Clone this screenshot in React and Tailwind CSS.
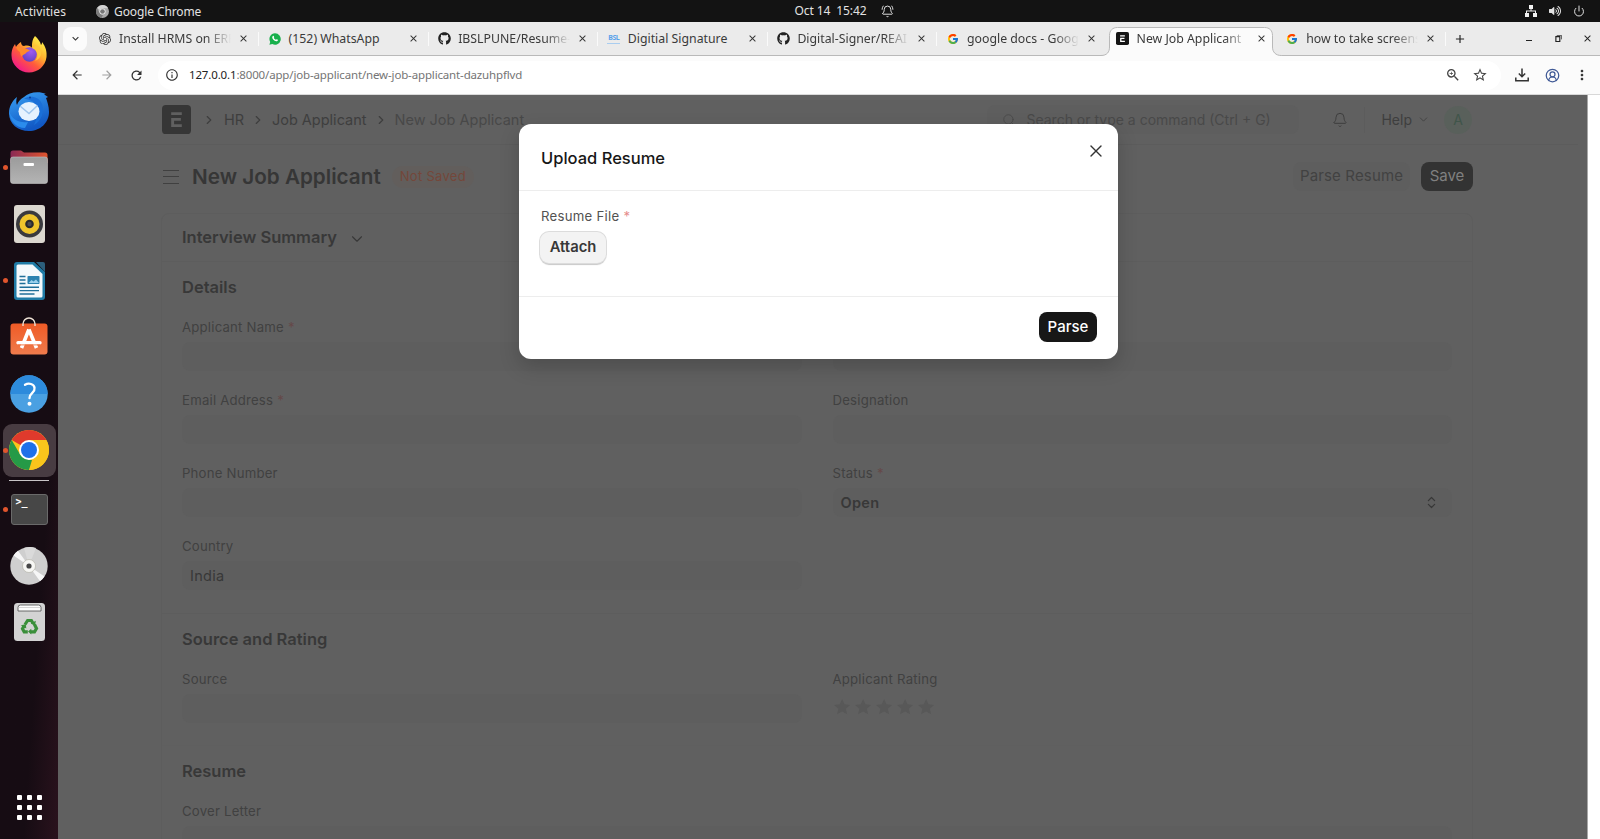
// src/App.jsx
import React from 'react';
import { FaGithub, FaVolumeUp } from 'react-icons/fa';
import { FcGoogle } from 'react-icons/fc';
import { SiOpenai } from 'react-icons/si';
import {
  MdArrowBack,
  MdArrowForward,
  MdRefresh,
  MdInfoOutline,
  MdZoomIn,
  MdStarBorder,
  MdMoreVert,
  MdAdd,
  MdClose,
  MdKeyboardArrowDown,
} from 'react-icons/md';
import { X, ChevronRight, ChevronDown, ChevronsUpDown, Search, Bell, BellRing, Power, CircleUserRound } from 'lucide-react';

// --- Small logos ---
const ErpLogo = ({ className, bg, fg }) => (
  <svg viewBox="0 0 30 30" className={className}>
    <rect width="30" height="30" rx="4" fill={bg} />
    <path d="M9.500 7.500h11v2.800h-11zM9.500 13.500h10v2.800h-7v3.700h8v2.800h-11z" fill={fg} />
  </svg>
);

const WhatsAppLogo = () => (
  <svg viewBox="0 0 12 12" className="w-[12px] h-[12px]">
    <path d="M6 .3a5.700 5.700 0 1 1-2.700 10.700L.4 11.700l.8-2.800A5.700 5.700 0 0 1 6 .3z" fill="#18b04c" />
    <path d="M3.700 3.200c.5-.6 1-.5 1.200.1l.3.9c-.1.400-.6.500-.4.900.5.800 1.100 1.300 2 1.700.4 0 .6-.7 1-.6l1.100.6c.3.800-.8 1.700-1.700 1.500-2.200-.5-4-2.500-4-4.100 0-.4.200-.8.500-1z" fill="#fff" />
  </svg>
);

const SignatureLogo = () => (
  <div className="w-[13px] flex flex-col items-center">
    <span className="text-[7px] leading-[8px] font-bold tracking-[-0.5px] text-[#5aa2ea]">BSL</span>
    <span className="w-[13px] h-px bg-[#a9cdf0] mt-px"></span>
  </div>
);

const MonoChrome = () => (
  <svg viewBox="0 0 14 14" className="w-[13px] h-[13px]">
    <circle cx="7" cy="7" r="7" fill="#a8a8a8" />
    <path d="M7 0a7 7 0 0 1 6.1 3.5H7A3.5 3.5 0 0 0 3.9 5.3L1.2 3A7 7 0 0 1 7 0z" fill="#d4d4d4" />
    <path d="M1 3.3l3 5.3A3.5 3.5 0 0 0 7.6 10.4L6 14A7 7 0 0 1 1 3.3z" fill="#7c7c7c" />
    <circle cx="7" cy="7" r="3.3" fill="#eee" />
    <circle cx="7" cy="7" r="2.5" fill="#777" />
  </svg>
);

// --- Dock icons ---
const Firefox = () => (
  <svg viewBox="0 0 36 38" className="w-[36px] h-[38px]">
    <defs>
      <linearGradient id="fx" x1="0.85" y1="0.1" x2="0.2" y2="0.95">
        <stop offset="0" stopColor="#fff04a" />
        <stop offset="0.35" stopColor="#ffb02e" />
        <stop offset="0.62" stopColor="#ff5a3c" />
        <stop offset="1" stopColor="#f2168f" />
      </linearGradient>
      <radialGradient id="fxGlobe" cx="0.6" cy="0.3" r="0.8">
        <stop offset="0" stopColor="#a05bf0" />
        <stop offset="1" stopColor="#5a3fc0" />
      </radialGradient>
    </defs>
    <path d="M24 1c3 3 5 5 6 9 1-1 1-2 1-3 4 5 5 10 4.500 15C34.500 31 27 37.500 18 37.500S.5 30 .5 20.500C.5 15 2 12 4 9l1 3c1-2 3-4 5-5 0 2 1 4 3 4 4-1 7 0 8 2 0-5 0-8 3-12z" fill="url(#fx)" />
    <circle cx="18.500" cy="19.500" r="7.300" fill="url(#fxGlobe)" />
    <path d="M5 12c3-1 5 0 7 2 3-1 5 0 7 2-2 0-3 1-4 2-1 2-4 1-4 4-1-1-2-3-2-5-2-1-3-3-4-5z" fill="#ff8a2a" />
    <path d="M21 13c6 2 7 9 3 13 8-3 8-12 2-16z" fill="#ffc83a" />
  </svg>
);

const Thunderbird = () => (
  <svg viewBox="0 0 40 40" className="w-[40px] h-[40px] mt-[2px]">
    <defs>
      <linearGradient id="tb" x1="0" y1="0" x2="0.4" y2="1">
        <stop offset="0" stopColor="#3aa2f5" />
        <stop offset="1" stopColor="#1158c4" />
      </linearGradient>
    </defs>
    <path d="M15 5C20 0 30-1 37 2c-2 0-2 1-1 1l3 2-2 1c1 3 3 8 3 14 0 11-9 19-20 19S0 32 0 21C0 15 3 9 8 5c-1 3-1 6 0 8 1-3 3-6 7-8z" fill="url(#tb)" />
    <path d="M15 7C20 3 30 4 33 12c3 8-1 17-8 21 3-7 4-12 2-19-2-5-7-7-12-7z" fill="#1a6fd8" />
    <ellipse cx="20" cy="19.500" rx="10.500" ry="9.500" fill="#e6f2fe" />
    <path d="M11 14l9 7.500 8.500-8" fill="none" stroke="#9fc6ee" strokeWidth="1.500" />
    <path d="M0 19c3 9 10 12 19 11l-3 6C7 36 1 29 0 19z" fill="#2b8cec" />
    <circle cx="21" cy="5.500" r="0.900" fill="#0b3c8c" />
  </svg>
);

const Files = () => (
  <svg viewBox="0 0 38 34" className="w-[38px] h-[34px]">
    <defs>
      <linearGradient id="fl" x1="0" x2="1">
        <stop offset="0" stopColor="#8a2a55" />
        <stop offset="1" stopColor="#e0552d" />
      </linearGradient>
      <linearGradient id="flFront" x1="0" x2="0" y1="0" y2="1">
        <stop offset="0" stopColor="#9b9b9b" />
        <stop offset="1" stopColor="#b4b4b4" />
      </linearGradient>
    </defs>
    <path d="M.5 3a2.500 2.500 0 0 1 2.500-2.500h8l3 2h21A2.500 2.500 0 0 1 37.500 5v8H.5z" fill="url(#fl)" />
    <rect x="0.500" y="7" width="37" height="26.500" rx="2.500" fill="url(#flFront)" stroke="#c4c4c4" strokeWidth="0.600" />
    <rect x="13.500" y="13" width="10.500" height="3" rx="1" fill="#fff" />
  </svg>
);

const Rhythmbox = () => (
  <svg viewBox="0 0 31 38" className="w-[31px] h-[38px]">
    <rect width="31" height="38" rx="3" fill="#dcd8d0" />
    <circle cx="15.500" cy="19" r="13.500" fill="#3a3a3e" />
    <circle cx="15.500" cy="19" r="10" fill="#f0c52c" />
    <circle cx="15.500" cy="19" r="4.300" fill="#2a2a2c" />
    <circle cx="15.500" cy="19" r="2.200" fill="#4a4a50" />
  </svg>
);

const Writer = () => (
  <svg viewBox="0 0 31 38" className="w-[31px] h-[38px]">
    <path d="M3 0h17l11 10v25a3 3 0 0 1-3 3H3a3 3 0 0 1-3-3V3a3 3 0 0 1 3-3z" fill="#1f7ba6" />
    <path d="M22 0h7a2 2 0 0 1 2 2v8z" fill="#2c5f7c" />
    <path d="M4 2.500h14.500L28.500 12v22a1.500 1.500 0 0 1-1.500 1.500H4A1.500 1.500 0 0 1 2.500 34V4A1.500 1.500 0 0 1 4 2.500z" fill="#f4f9fc" />
    <path d="M5.500 14.500h6M5.500 18h6M5.500 21.500h6M5.500 25.300h19.500M5.500 28.600h19.500M5.500 32h15" stroke="#1f6f99" strokeWidth="1.400" />
    <rect x="13.500" y="14" width="12" height="8" rx="0.800" fill="#2b82b0" />
    <path d="M14.500 21l3-3 2 1.500 2.500-2 3 3.500z" fill="#9bd0ec" />
  </svg>
);

const Store = () => (
  <svg viewBox="0 0 38 38" className="w-[38px] h-[38px] mb-[3px]">
    <defs>
      <linearGradient id="st" x1="0" x2="0" y1="0" y2="1">
        <stop offset="0" stopColor="#ef5b26" />
        <stop offset="1" stopColor="#ef7b4c" />
      </linearGradient>
    </defs>
    <rect x="0.500" y="6.500" width="37" height="31" rx="3" fill="url(#st)" />
    <path d="M13 9V7a6 6 0 0 1 12 0v2" fill="none" stroke="#efe3d6" strokeWidth="1.400" />
    <path d="M18.900 12.500L11.500 31M18.900 12.500L26.500 31" stroke="#fff" strokeWidth="3.600" />
    <path d="M8 25.700h22" stroke="#fff" strokeWidth="3.400" strokeLinecap="round" />
    <path d="M8 27.900h22" stroke="#ef6f3c" strokeWidth="0.900" />
  </svg>
);

const HelpIcon = () => (
  <svg viewBox="0 0 38 38" className="w-[38px] h-[38px]">
    <circle cx="19" cy="19" r="18.700" fill="#4aa0e2" />
    <path d="M.3 19a18.700 18.700 0 0 1 37.400 0z" fill="#2d8bdc" />
    <path d="M15 9.800c2-1.200 4-1.400 6-.8 4.300 1.300 4.600 5.800 1.500 8.700-2 1.800-3 3-3 5.500" fill="none" stroke="#fff" strokeWidth="2.300" strokeLinecap="round" />
    <circle cx="19.500" cy="28.700" r="2" fill="#fff" />
  </svg>
);

const Chrome = () => (
  <svg viewBox="0 0 40 40" className="w-[40px] h-[40px]">
    <circle cx="20" cy="20" r="20" fill="#f9c51c" />
    <path d="M20 20L2.700 10A20 20 0 0 1 37.300 10z" fill="#df3a2c" />
    <path d="M2.700 10l8.700 15L20 30l3 0-3 10A20 20 0 0 1 2.700 10z" fill="#259a47" />
    <path d="M28.700 25L20 40A20 20 0 0 0 37.300 10H20z" fill="#f9c51c" />
    <circle cx="20" cy="20" r="10" fill="#fff" />
    <circle cx="20" cy="20" r="8" fill="#1f70e8" />
  </svg>
);

const Terminal = () => (
  <div className="w-[37px] h-[31px] rounded-[3px] bg-[#474747] border border-[#6a6a6a] pl-1 text-[10px] leading-[13px] text-white font-bold font-['DejaVu_Sans_Mono',monospace]">
    &gt;_
  </div>
);

const Disc = () => (
  <svg viewBox="0 0 38 38" className="w-[38px] h-[38px]">
    <circle cx="19" cy="19" r="18.700" fill="#cfcfcf" />
    <path d="M19 19L3.500 8.500A18.700 18.700 0 0 1 8 3.800zM19 19l15.500 10.500a18.700 18.700 0 0 1-4.500 4.700z" fill="#f6f6f6" />
    <path d="M19 19L14 1a18.700 18.700 0 0 1 12 0z" fill="#dadada" />
    <circle cx="19" cy="19" r="6.500" fill="#f7f7f4" stroke="#b0aea2" strokeWidth="0.600" />
    <circle cx="19" cy="19" r="2.600" fill="#474747" />
  </svg>
);

const Trash = () => (
  <svg viewBox="0 0 31 38" className="w-[31px] h-[38px]">
    <rect width="31" height="38" rx="3.500" fill="#d3d3d3" />
    <path d="M4 8V4.500A2.500 2.500 0 0 1 6.500 2h18A2.500 2.500 0 0 1 27 4.500V8z" fill="#fff" stroke="#5a5a5a" strokeWidth="0.900" />
    <path d="M5 4.500h21" stroke="#c4c4c4" strokeWidth="0.700" />
    <g fill="none" stroke="#3a8f3a" strokeWidth="3.200">
      <path d="M11 21.500l2.600-4h3.800l1.600 2.700" />
      <path d="M20.500 21.500l2 4-2 3.300h-4" />
      <path d="M13.800 28.800h-3.600l-1.700-3 1.800-3.200" />
    </g>
    <path d="M21.800 17.800l-.8 5.200-4.200-2.400zM17.300 25.800v5.700l-3.300-2.900zM6.800 22.600l5-1.600.5 4.600z" fill="#3a8f3a" />
  </svg>
);

const dockApps = [
  { name: 'firefox', Icon: Firefox },
  { name: 'thunderbird', Icon: Thunderbird },
  { name: 'files', Icon: Files, running: true },
  { name: 'rhythmbox', Icon: Rhythmbox },
  { name: 'writer', Icon: Writer, running: true },
  { name: 'store', Icon: Store },
  { name: 'help', Icon: HelpIcon },
  { name: 'chrome', Icon: Chrome, running: true, active: true },
];

const dockExtras = [
  { name: 'terminal', Icon: Terminal, running: true },
  { name: 'disc', Icon: Disc },
  { name: 'trash', Icon: Trash },
];

const DockItem = ({ app }) => (
  <div className="relative w-full h-[56.6px] flex items-center justify-center flex-shrink-0">
    {app.running && <span className="absolute left-[3px] w-[5px] h-[5px] rounded-full bg-[#e0552d] z-10"></span>}
    <div className={`w-[53px] h-[53px] rounded-[9px] flex items-center justify-center ${app.active ? 'bg-[#483c42]' : ''}`}>
      <app.Icon />
    </div>
  </div>
);

const Dock = () => (
  <aside className="w-[58px] flex-shrink-0 bg-gradient-to-br from-[#160c13] from-70% to-[#2a121d] flex flex-col items-center pt-1">
    {dockApps.map((app) => (
      <DockItem key={app.name} app={app} />
    ))}
    <div className="w-10 h-px bg-[#c9c5c7] mt-[1px] flex-shrink-0"></div>
    {dockExtras.map((app) => (
      <DockItem key={app.name} app={app} />
    ))}
    <div className="mt-auto mb-[19px] grid grid-cols-3 gap-[5px]">
      {[...Array(9)].map((_, i) => (
        <span key={i} className="w-[5px] h-[5px] rounded-[1px] bg-white"></span>
      ))}
    </div>
  </aside>
);

const TopBar = () => (
  <header className="h-[22px] flex-shrink-0 bg-[#131313] text-[#e2e2e2] text-[12px] flex items-center">
    <div className="flex-1 flex items-center pt-px">
      <span className="ml-[15px] tracking-[0.1px]">Activities</span>
      <span className="ml-[30px] flex items-center gap-[5px] tracking-[-0.1px]">
        <MonoChrome />
        Google Chrome
      </span>
    </div>
    <div className="flex items-center ml-[104px]">
      <span className="whitespace-pre tracking-[-0.1px]">Oct 14  15:42</span>
      <BellRing className="w-[13px] h-[13px] ml-[15px]" strokeWidth={1.8} />
    </div>
    <div className="flex-1 flex items-center justify-end gap-[12px] pr-[15px]">
      <svg viewBox="0 0 12 12" className="w-[12px] h-[12px]" fill="#f2f2f2">
        <path d="M4 0h4v4H4zM0 8h4v4H0zM8 8h4v4H8zM5.500 4h1v1.500H11V8h-1V6.500H2V8H1V5.500h4.500z" />
      </svg>
      <FaVolumeUp className="w-[12px] h-[12px]" />
      <Power className="w-[12px] h-[12px]" strokeWidth={2} />
    </div>
  </header>
);

const tabs = [
  { title: 'Install HRMS on ERP', icon: <SiOpenai className="w-[12px] h-[12px] text-[#333]" />, fade: true },
  { title: '(152) WhatsApp', icon: <WhatsAppLogo /> },
  { title: 'IBSLPUNE/Resume-', icon: <FaGithub className="w-[13px] h-[13px] text-[#222]" />, fade: true },
  { title: 'Digitial Signature', icon: <SignatureLogo /> },
  { title: 'Digital-Signer/REAI', icon: <FaGithub className="w-[13px] h-[13px] text-[#222]" />, fade: true },
  { title: 'google docs - Goog', icon: <FcGoogle className="w-[12px] h-[12px]" />, fade: true },
  { title: 'New Job Applicant', icon: <ErpLogo className="w-[13px] h-[13px]" bg="#151515" fg="#fff" />, fade: true, active: true },
  { title: 'how to take screens', icon: <FcGoogle className="w-[12px] h-[12px]" />, fade: true },
];

const Tab = ({ tab, divider }) => (
  <div className="relative w-[169.6px] h-full flex items-center pl-[9px] flex-shrink-0">
    {tab.active && (
      <svg viewBox="0 0 184 29" className="absolute left-[-6px] bottom-[-1px] w-[184px] h-[29px]">
        <path d="M-1 28.500H0c6 0 8.500-3.500 8.500-8.500V8.500c0-5 3-8 8-8h147c5 0 8 3 8 8V20c0 5 3 8.500 9 8.500h4V30H-1z" fill="#fbfbfb" />
        <path d="M0 28.500c6 0 8.500-3.500 8.500-8.500V8.500c0-5 3-8 8-8h147c5 0 8 3 8 8V20c0 5 3 8.500 9 8.500h4" fill="none" stroke="#b9b9b9" />
      </svg>
    )}
    <div className="relative w-[13px] flex justify-center mr-[7.500px]">{tab.icon}</div>
    <div
      className={`relative w-[112px] pt-[2px] text-[12.300px] text-[#3a3a3a] whitespace-nowrap ${
        tab.fade ? '[mask-image:linear-gradient(to_right,black_78%,transparent)]' : ''
      }`}
    >
      {tab.title}
    </div>
    <MdClose className="relative w-[11px] h-[11px] ml-[7px] text-[#333]" />
    {divider && <span className="absolute right-0 w-px h-[14px] bg-[#fafafa]"></span>}
  </div>
);

const BrowserChrome = () => (
  <div className="flex-shrink-0">
    <div className="h-[34px] bg-[#ebebeb] border-b border-[#b9b9b9] flex items-center">
      <div className="w-[24px] h-[24px] ml-[5px] mr-[2.500px] rounded-[8px] bg-[#fbfbfb] flex items-center justify-center flex-shrink-0">
        <MdKeyboardArrowDown className="w-[13px] h-[13px] text-[#333]" />
      </div>
      {tabs.map((tab, i) => (
        <Tab key={i} tab={tab} divider={!tab.active && i !== 5} />
      ))}
      <MdAdd className="w-[14px] h-[14px] ml-[7px] text-[#222]" />
      <div className="ml-auto flex items-center text-[#222]">
        <span className="w-[6px] h-px bg-[#222] mt-[4px]"></span>
        <svg viewBox="0 0 8 8" className="w-[7px] h-[7px] ml-[23px]" fill="none" stroke="#222">
          <path d="M1 1.800h4.500V7.500H1z" strokeWidth="1.300" />
          <path d="M2 .5h5.500V5" strokeWidth="0.800" />
        </svg>
        <MdClose className="w-[11px] h-[11px] ml-[20px] mr-[7px]" />
      </div>
    </div>
    <div className="h-[39px] bg-[#fbfbfb] border-b border-[#d8d8d8] flex items-center text-[#444]">
      <MdArrowBack className="w-[14px] h-[14px] ml-[12px] text-[#333]" />
      <MdArrowForward className="w-[14px] h-[14px] ml-[16px] text-[#a0a0a0]" />
      <MdRefresh className="w-[15px] h-[15px] ml-[15px] text-[#333]" />
      <div className="w-[1343px] h-[29px] ml-[14px] rounded-full bg-white flex items-center pl-[7px]">
        <MdInfoOutline className="w-[14px] h-[14px] text-[#333]" />
        <span className="ml-[10px] text-[11.500px] tracking-[-0.150px] text-[#757575]">
          <span className="text-[#222]">127.0.0.1</span>:8000/app/job-applicant/new-job-applicant-dazuhpflvd
        </span>
        <MdZoomIn className="w-[16px] h-[16px] ml-auto" />
        <MdStarBorder className="w-[16px] h-[16px] ml-[11px] mr-[13px]" />
      </div>
      <svg viewBox="0 0 14 14" className="w-[14px] h-[14px] ml-[14px]" fill="none" stroke="#333" strokeWidth="1.500">
        <path d="M7 .5v8M3.800 5.500L7 8.700l3.200-3.200M.8 9.500v3.200h12.400V9.500" />
      </svg>
      <CircleUserRound className="w-[15px] h-[15px] ml-[16px] text-[#405a96]" strokeWidth={2} />
      <MdMoreVert className="w-[16px] h-[16px] ml-[14px] text-[#333]" />
    </div>
  </div>
);

// --- Page behind the modal ---
const Navbar = () => (
  <nav className="h-[50px] border-b border-[#5c5c5c] pl-[104px] pr-[106px] flex items-center text-[14.500px] text-[#3e3e3e]">
    <ErpLogo className="w-[29px] h-[29px]" bg="#363636" fg="#606060" />
    <ChevronRight className="w-[14px] h-[14px] ml-[11px]" />
    <span className="ml-[8px] tracking-[-0.100px]">HR</span>
    <ChevronRight className="w-[14px] h-[14px] ml-[7px]" />
    <span className="ml-[7px]">Job Applicant</span>
    <ChevronRight className="w-[14px] h-[14px] ml-[7px]" />
    <span className="ml-[7px] text-[#484848]">New Job Applicant</span>
    <div className="ml-auto w-[312px] h-[29px] rounded-[8px] bg-[#5e5e5e] flex items-center pl-[15px] text-[14px] text-[#494949]">
      <Search className="w-[14px] h-[14px] mr-[10px]" strokeWidth={1.500} />
      Search or type a command (Ctrl + G)
    </div>
    <Bell className="w-[16px] h-[16px] ml-[33px]" strokeWidth={1.500} />
    <span className="w-px h-[26px] bg-[#5c5c5c] ml-[16px] mr-[16px]"></span>
    <span className="text-[14px]">Help</span>
    <ChevronDown className="w-[13px] h-[13px] ml-[5px]" strokeWidth={1.500} />
    <div className="w-[28px] h-[28px] rounded-full bg-[#59605b] text-[#40554a] ml-[14px] flex items-center justify-center text-[14px]">A</div>
  </nav>
);

const PageHead = () => (
  <div className="h-[63px] pl-[104px] pr-[105px] flex items-center">
    <div className="w-[16px] flex flex-col gap-[5.500px] ml-[1px]">
      <span className="h-px bg-[#404040]"></span>
      <span className="h-px bg-[#404040]"></span>
      <span className="h-px bg-[#404040]"></span>
    </div>
    <h1 className="ml-[13px] text-[20.700px] font-semibold text-[#363636]">New Job Applicant</h1>
    <span className="ml-[11px] h-[22px] px-[8px] rounded-full bg-[#625e5c] text-[#74473a] text-[13px] flex items-center tracking-[0.300px]">Not Saved</span>
    <button className="ml-auto w-[117px] h-[29px] rounded-[8px] bg-[#5e5e5e] text-[#424242] text-[15px] tracking-[0.150px]">Parse Resume</button>
    <button className="ml-[11px] w-[52px] h-[29px] rounded-[8px] bg-[#333] text-[#808080] text-[15px]">Save</button>
  </div>
);

const Field = ({ label, required, value, bold, select, children }) => (
  <div className="h-[73px]">
    <div className="h-[26px] flex items-center text-[13.200px] text-[#414141] tracking-[0.200px]">
      {label}
      {required && <span className="ml-[4px] text-[#654848]">*</span>}
    </div>
    {children || (
      <div
        className={`mt-[1px] h-[29px] rounded-[8px] bg-[#5e5e5e] px-[8px] flex items-center justify-between text-[14.500px] text-[#383838] tracking-[0.300px] ${
          bold ? 'font-semibold' : ''
        }`}
      >
        {value}
        {select && <ChevronsUpDown className="w-[15px] h-[15px] mr-[5px]" strokeWidth={2} />}
      </div>
    )}
  </div>
);

const SectionTitle = ({ children }) => (
  <h2 className="h-[51px] mb-[2px] flex items-center text-[16.500px] font-semibold text-[#383838]">{children}</h2>
);

const Form = () => (
  <div className="ml-[103px] mr-[105px] mt-[5px] h-[700px] border border-[#5d5d5d] rounded-[8px]">
    <section className="h-[48px] px-[20px] border-b border-[#5d5d5d] flex items-center text-[16.500px] font-semibold text-[#383838]">
      Interview Summary
      <ChevronDown className="w-[18px] h-[18px] ml-[11px] mt-[3px]" strokeWidth={1.500} />
    </section>
    <section className="h-[352px] px-[20px] border-b border-[#5d5d5d]">
      <SectionTitle>Details</SectionTitle>
      <div className="grid grid-cols-2 gap-x-[31px]">
        <div>
          <Field label="Applicant Name" required />
          <Field label="Email Address" required />
          <Field label="Phone Number" />
          <Field label="Country" value="India" />
        </div>
        <div>
          <Field label="" />
          <Field label="Designation" />
          <Field label="Status" required value="Open" bold select />
        </div>
      </div>
    </section>
    <section className="h-[132px] px-[20px] border-b border-[#5f5f5f]">
      <SectionTitle>Source and Rating</SectionTitle>
      <div className="grid grid-cols-2 gap-x-[31px]">
        <Field label="Source" />
        <Field label="Applicant Rating">
          <div className="mt-[5px] flex gap-[3px]">
            {[1, 2, 3, 4, 5].map((n) => (
              <svg key={n} viewBox="0 0 18 18" className="w-[18.200px] h-[18px]" fill="#585858">
                <path d="M9 1l2.400 5.300 5.600.6-4.200 3.800 1.200 5.600L9 13.500l-5 2.800 1.200-5.600L1 6.900l5.600-.6z" />
              </svg>
            ))}
          </div>
        </Field>
      </div>
    </section>
    <section className="px-[20px]">
      <SectionTitle>Resume</SectionTitle>
      <Field label="Cover Letter" />
    </section>
  </div>
);

const UploadModal = () => (
  <div className="absolute left-[519px] top-[124px] w-[599px] h-[235px] rounded-[12px] bg-white shadow-[0_8px_20px_rgba(0,0,0,0.18)] flex flex-col text-[#171717]">
    <div className="h-[67px] border-b border-[#ededed] px-[22px] flex items-center justify-between flex-shrink-0">
      <h3 className="text-[16.500px] font-medium pt-[2px]">Upload Resume</h3>
      <X className="w-[20px] h-[20px] mr-[-10px] mb-[12px] text-[#333]" strokeWidth={1.600} />
    </div>
    <div className="flex-1 border-b border-[#ededed] px-[22px] pt-[13px]">
      <div className="h-[26px] flex items-center text-[13.200px] text-[#525252] tracking-[0.260px]">
        Resume File <span className="ml-[4px] text-[#e58a8a]">*</span>
      </div>
      <button className="mt-[2px] -ml-px w-[66px] h-[31px] rounded-[9px] bg-[#f3f3f3] text-[#383838] text-[14.800px] font-semibold shadow-[0_0_0_1px_#dcdcdc,0_2px_1px_#c8c8c8]">
        Attach
      </button>
    </div>
    <div className="h-[62px] px-[21px] pb-[2px] flex items-center justify-end">
      <button className="w-[58px] h-[30px] rounded-[8px] bg-[#171717] text-white text-[15px] font-medium">Parse</button>
    </div>
  </div>
);

const App = () => {
  return (
    <div className="relative w-[1600px] h-[839px] overflow-hidden flex flex-col font-['Noto_Sans',sans-serif]">
      <TopBar />
      <div className="flex-1 min-h-0 flex">
        <Dock />
        <main className="flex-1 min-w-0 flex flex-col bg-white">
          <BrowserChrome />
          <div className="flex-1 min-h-0 w-[1530px] overflow-hidden bg-[#606060] border-r border-[#a8a8a8] font-['Inter',sans-serif]">
            <div className="w-[1520px]">
              <Navbar />
              <PageHead />
              <Form />
            </div>
          </div>
        </main>
      </div>
      <div className="font-['Inter',sans-serif]">
        <UploadModal />
      </div>
    </div>
  );
};

export default App;
